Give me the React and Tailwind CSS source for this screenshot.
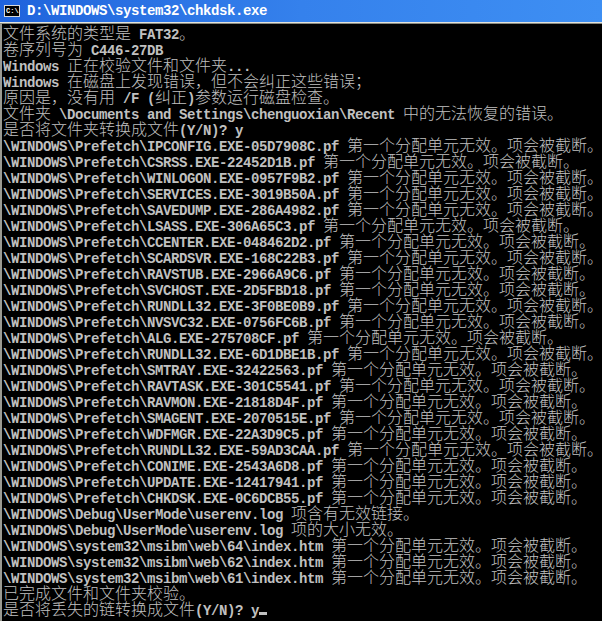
import React from 'react';

const mono = "font-['Liberation_Mono','DejaVu_Sans_Mono',monospace]";
const cjk = "font-['Noto_Sans_CJK_SC','Noto_Sans_CJK_JP',sans-serif]";

const TAIL = ' 第一个分配单元无效。项会被截断。';

const prefetch = [
  'IPCONFIG.EXE-05D7908C.pf',
  'CSRSS.EXE-22452D1B.pf',
  'WINLOGON.EXE-0957F9B2.pf',
  'SERVICES.EXE-3019B50A.pf',
  'SAVEDUMP.EXE-286A4982.pf',
  'LSASS.EXE-306A65C3.pf',
  'CCENTER.EXE-048462D2.pf',
  'SCARDSVR.EXE-168C22B3.pf',
  'RAVSTUB.EXE-2966A9C6.pf',
  'SVCHOST.EXE-2D5FBD18.pf',
  'RUNDLL32.EXE-3F0BE0B9.pf',
  'NVSVC32.EXE-0756FC6B.pf',
  'ALG.EXE-275708CF.pf',
  'RUNDLL32.EXE-6D1DBE1B.pf',
  'SMTRAY.EXE-32422563.pf',
  'RAVTASK.EXE-301C5541.pf',
  'RAVMON.EXE-21818D4F.pf',
  'SMAGENT.EXE-2070515E.pf',
  'WDFMGR.EXE-22A3D9C5.pf',
  'RUNDLL32.EXE-59AD3CAA.pf',
  'CONIME.EXE-2543A6D8.pf',
  'UPDATE.EXE-12417941.pf',
  'CHKDSK.EXE-0C6DCB55.pf',
];

const lines = [
  '文件系统的类型是 FAT32。',
  '卷序列号为 C446-27DB',
  'Windows 正在校验文件和文件夹...',
  'Windows 在磁盘上发现错误，但不会纠正这些错误；',
  '原因是，没有用 /F (纠正)参数运行磁盘检查。',
  '文件夹 \\Documents and Settings\\chenguoxian\\Recent 中的无法恢复的错误。',
  '是否将文件夹转换成文件(Y/N)? y',
  ...prefetch.map((f) => '\\WINDOWS\\Prefetch\\' + f + TAIL),
  '\\WINDOWS\\Debug\\UserMode\\userenv.log 项含有无效链接。',
  '\\WINDOWS\\Debug\\UserMode\\userenv.log 项的大小无效。',
  '\\WINDOWS\\system32\\msibm\\web\\64\\index.htm' + TAIL,
  '\\WINDOWS\\system32\\msibm\\web\\62\\index.htm' + TAIL,
  '\\WINDOWS\\system32\\msibm\\web\\61\\index.htm' + TAIL,
  '已完成文件和文件夹校验。',
  '是否将丢失的链转换成文件(Y/N)? y',
];

const WIDE = /[\u3000-\u303f\u4e00-\u9fff\uff00-\uffef]/;

// split a line into runs of wide (CJK) and narrow (ASCII) characters
const splitRuns = (text) => {
  const runs = [];
  const re = /[\u3000-\u303f\u4e00-\u9fff\uff00-\uffef]+|[^\u3000-\u303f\u4e00-\u9fff\uff00-\uffef]+/g;
  let m;
  while ((m = re.exec(text))) {
    runs.push({ wide: WIDE.test(m[0]), text: m[0] });
  }
  return runs;
};

const Line = ({ text, cursor }) => (
  <div className="flex h-4 items-baseline whitespace-pre">
    {splitRuns(text).map((r, i) =>
      r.wide ? (
        <span key={i} className={`${cjk} text-[16px] leading-4 font-light`}>
          {r.text}
        </span>
      ) : (
        <span key={i} className={`${mono} text-[14px] tracking-[-0.4px] leading-4 font-bold`}>
          {r.text}
        </span>
      )
    )}
    {cursor && <span className="inline-block w-2 h-[3px] bg-[#c0c0c0]" />}
  </div>
);

export default function App() {
  return (
    <div className="w-[602px] h-[621px] overflow-hidden bg-black flex flex-col">
      {/* title bar */}
      <div className="h-[22px] shrink-0 flex items-center gap-[7px] pl-1 bg-gradient-to-r from-[#1f63dc] via-[#3581ec] to-[#3e8ff3]">
        <div className="w-4 h-3 bg-black border border-[#d8d8d8] flex items-center pl-[1px]">
          <span className={`${mono} text-[7px] leading-none font-bold text-white`}>C:\</span>
        </div>
        <span className={`${mono} text-[14px] tracking-[-0.4px] font-bold text-white`}>
          D:\WINDOWS\system32\chkdsk.exe
        </span>
      </div>
      <div className="h-px shrink-0 bg-[#e4e4dc]" />
      <div className="h-px shrink-0 bg-[#8a8a80]" />
      {/* console */}
      <div className="flex-1 border-l-2 border-[#9a9a92] pl-[1px] text-[#c0c0c0]">
        {lines.map((l, i) => (
          <Line key={i} text={l} cursor={i === lines.length - 1} />
        ))}
      </div>
    </div>
  );
}
